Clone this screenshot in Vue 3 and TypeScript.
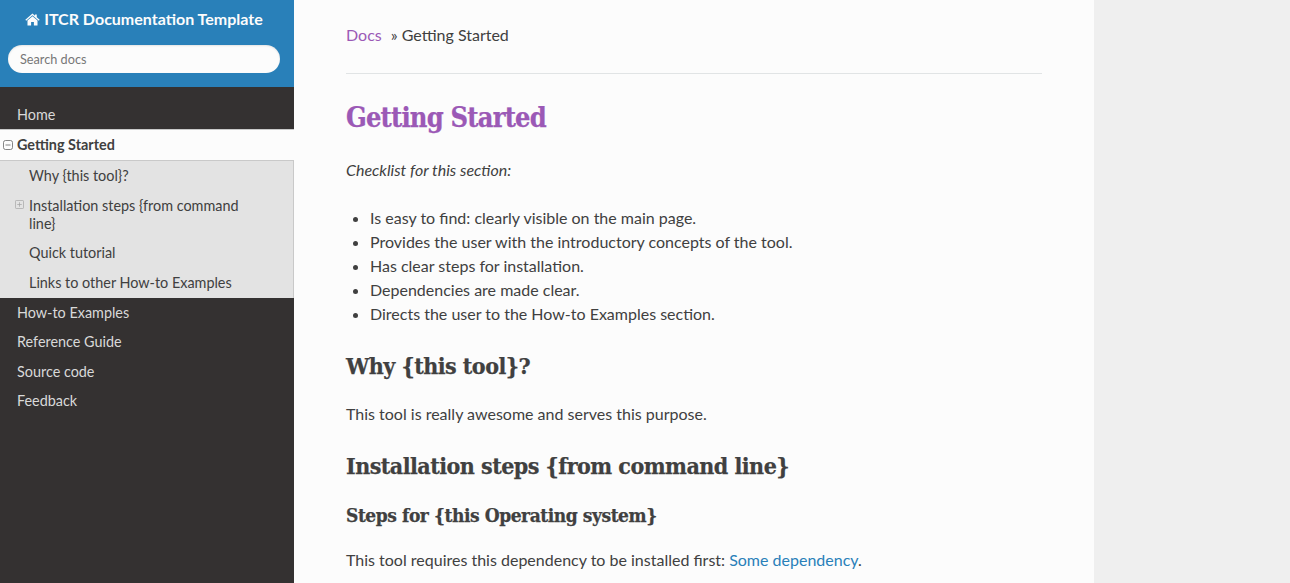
<script setup lang="ts">
const sub = [
  { label: 'Why {this tool}?', plus: false },
  { label: 'Installation steps {from command line}', plus: true },
  { label: 'Quick tutorial', plus: false },
  { label: 'Links to other How-to Examples', plus: false },
]
const after = ['How-to Examples', 'Reference Guide', 'Source code', 'Feedback']
const checklist = [
  'Is easy to find: clearly visible on the main page.',
  'Provides the user with the introductory concepts of the tool.',
  'Has clear steps for installation.',
  'Dependencies are made clear.',
  'Directs the user to the How-to Examples section.',
]
</script>

<template>
  <div class="page">
    <nav class="side">
      <div class="search">
        <a class="brand">
          <svg class="home" viewBox="0 0 16 14" width="15" height="13">
            <path fill="#fcfcfc" d="M8 0.6 L10.6 2.9 V1.6 H12.6 V4.7 L15.7 7.4 L14.8 8.3 L8 2.4 L1.2 8.3 L0.3 7.4 Z M8 3.6 L13.4 8.2 V13.4 H9.5 V9.6 H6.5 V13.4 H2.6 V8.2 Z" />
          </svg>
          ITCR Documentation Template
        </a>
        <input class="box" type="text" placeholder="Search docs" />
      </div>
      <ul class="menu">
        <li class="top home-item">Home</li>
        <li class="top current">
          <svg class="tog" viewBox="0 0 10 10" width="10" height="10">
            <rect x="0.5" y="0.5" width="9" height="9" rx="2" fill="none" stroke="#666" stroke-width="0.8" />
            <path d="M2.5 5H7.5" stroke="#666" stroke-width="0.8" />
          </svg>
          Getting Started
        </li>
        <li class="subwrap">
          <ul class="sublist">
            <li v-for="s in sub" :key="s.label" class="subitem">
              <svg v-if="s.plus" class="tog2" viewBox="0 0 10 10" width="9" height="9">
                <rect x="0.5" y="0.5" width="9" height="9" rx="1" fill="none" stroke="#a5a5a5" stroke-width="0.8" />
                <path d="M2.5 5H7.5M5 2.5V7.5" stroke="#a5a5a5" stroke-width="0.8" />
              </svg>
              {{ s.label }}
            </li>
          </ul>
        </li>
        <li v-for="a in after" :key="a" class="top">{{ a }}</li>
      </ul>
    </nav>
    <main class="content">
      <div class="crumbs"><a class="docs">Docs</a><span class="sep">»</span> Getting Started</div>
      <hr class="rule" />
      <h1>Getting Started</h1>
      <p class="check"><em>Checklist for this section:</em></p>
      <ul class="bullets">
        <li v-for="c in checklist" :key="c">{{ c }}</li>
      </ul>
      <h2>Why {this tool}?</h2>
      <p>This tool is really awesome and serves this purpose.</p>
      <h2 class="second">Installation steps {from command line}</h2>
      <h3>Steps for {this Operating system}</h3>
      <p>This tool requires this dependency to be installed first: <a class="link">Some dependency</a>.</p>
    </main>
    <div class="rest"></div>
  </div>
</template>

<style>
html, body { margin: 0; height: 100%; overflow: hidden; }
</style>

<style scoped>
.page {
  display: flex;
  width: 1290px;
  height: 583px;
  overflow: hidden;
  font-family: Lato, "Liberation Sans", sans-serif;
  color: #404040;
  background: #efefef;
}
.side {
  width: 294px;
  flex: none;
  background: #343131;
}
.search {
  height: 87px;
  box-sizing: border-box;
  background: #2980b9;
  padding: 8px 14px 0 8px;
  text-align: center;
}
.brand {
  display: block;
  color: #fcfcfc;
  font-size: 16px;
  font-weight: 700;
  line-height: 21px;
  margin-bottom: 16px;
  white-space: nowrap;
}
.home { vertical-align: -1px; }
.box {
  display: block;
  width: 272px;
  height: 28px;
  box-sizing: border-box;
  border: none;
  border-radius: 14px;
  padding: 0 12px;
  font-family: inherit;
  font-size: 12.7px;
  background: #fcfcfc;
  outline: none;
  box-shadow: inset 0 1px 2px rgba(0, 0, 0, 0.1);
}
.box::placeholder { color: #777; opacity: 1; }
.menu, .sublist { list-style: none; margin: 0; padding: 0; }
.menu { padding-top: 14px; }
.top {
  position: relative;
  color: #d9d9d9;
  font-size: 14.4px;
  line-height: 18px;
  padding: 5.5px 17px 6.1px;
}
.home-item { padding: 5.4px 17px 4.6px; }
.current {
  background: #fcfcfc;
  color: #404040;
  font-weight: 700;
  border-top: 1px solid #c9c9c9;
  border-bottom: 1px solid #c9c9c9;
  padding: 5.7px 17px 6.3px;
}
.tog { position: absolute; left: 3px; top: 10.5px; }
.subwrap { background: #e3e3e3; border-right: 1px solid #c9c9c9; }
.subitem {
  position: relative;
  color: #404040;
  font-size: 14.4px;
  line-height: 18px;
  padding: 5.8px 40px 6px 29px;
}
.tog2 { position: absolute; left: 15px; top: 9.5px; }
.content {
  width: 800px;
  flex: none;
  box-sizing: border-box;
  background: #fcfcfc;
  padding: 24px 52px 0;
  font-size: 16px;
  line-height: 24px;
}
.rest { flex: 1; }
.crumbs { line-height: 21px; }
.docs { color: #9b59b6; margin-right: 9px; }
.rule {
  border: none;
  border-top: 1px solid #e1e4e5;
  margin: 28px 0 0;
}
h1, h2, h3 {
  font-family: "DejaVu Serif Condensed", "DejaVu Serif", serif;
  font-stretch: condensed;
  font-weight: 700;
  margin: 0;
  -webkit-text-stroke: 0.25px currentColor;
}
h1 {
  color: #9b59b6;
  font-size: 27px;
  line-height: 34px;
  margin-top: 27px;
  letter-spacing: -0.8px;
}
.check { margin: 0; padding-top: 23px; }
p { margin: 0; }
.bullets { margin: 24px 0 0; padding: 0 0 0 24px; }
h2 {
  font-size: 23px;
  line-height: 28px;
  margin-top: 26px;
  letter-spacing: -0.53px;
}
h2 + p { margin-top: 22px; }
h2.second { margin-top: 26px; }
h3 {
  font-size: 19px;
  line-height: 24px;
  margin-top: 23px;
  letter-spacing: -0.44px;
}
h3 + p { margin-top: 21px; }
.link { color: #2980b9; }
</style>
